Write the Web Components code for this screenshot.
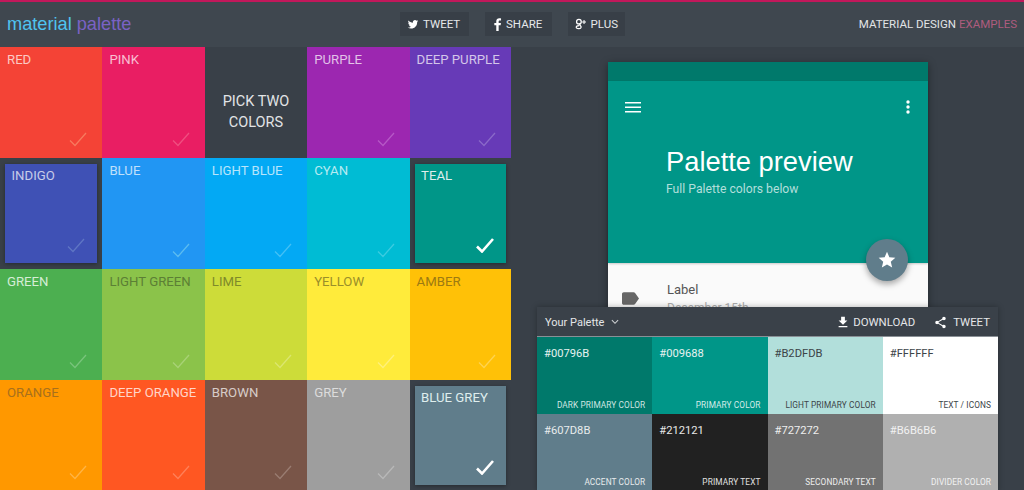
<!DOCTYPE html>
<html>
<head>
<meta charset="utf-8">
<title>material palette</title>
<style>
    html, body{
        margin: 0;
        height: 490px;
        overflow: hidden;
        background: #394048;
        font-family: Roboto, "Liberation Sans", sans-serif;
    }
    mp-app-row{
        display: grid;
    }
</style>
</head>
<body>
<mp-header></mp-header>
<mp-app-row style="grid-template-columns: 511px 513px;">
    <mp-grid>
        <mp-tile color="#F44336" check="#f77a5e">RED</mp-tile>
        <mp-tile color="#E91E63" check="#ef4f80">PINK</mp-tile>
        <mp-tile color="#394048" plain>PICK TWO<br>COLORS</mp-tile>
        <mp-tile color="#9C27B0" check="#b658c6">PURPLE</mp-tile>
        <mp-tile color="#673AB7" check="#8a69c9">DEEP PURPLE</mp-tile>

        <mp-tile color="#3F51B5" check="#5f76c4" selected>INDIGO</mp-tile>
        <mp-tile color="#2196F3" check="#5cbcf0">BLUE</mp-tile>
        <mp-tile color="#03A9F4" check="#44c0f5">LIGHT BLUE</mp-tile>
        <mp-tile color="#00BCD4" check="#3ccbe0">CYAN</mp-tile>
        <mp-tile color="#009688" check="#fff" selected active>TEAL</mp-tile>

        <mp-tile color="#4CAF50" check="#79c47c" text="#d5edd6">GREEN</mp-tile>
        <mp-tile color="#8BC34A" check="#a8d276" text="#5c7f35">LIGHT GREEN</mp-tile>
        <mp-tile color="#CDDC39" check="#dbe66f" text="#7f8a2a">LIME</mp-tile>
        <mp-tile color="#FFEB3B" check="#fff07a" text="#9a8f2a">YELLOW</mp-tile>
        <mp-tile color="#FFC107" check="#ffd350" text="#9c7a12">AMBER</mp-tile>

        <mp-tile color="#FF9800" check="#ffb445" text="#a8701c">ORANGE</mp-tile>
        <mp-tile color="#FF5722" check="#ff8059" text="#ffd5c8">DEEP ORANGE</mp-tile>
        <mp-tile color="#795548" check="#9a7d72" text="#d7ccc8">BROWN</mp-tile>
        <mp-tile color="#9E9E9E" check="#b8b8b8" text="#dcdcdc">GREY</mp-tile>
        <mp-tile color="#607D8B" check="#fff" selected active>BLUE GREY</mp-tile>
    </mp-grid>
    <mp-preview></mp-preview>
</mp-app-row>

<script>
class MpHeader extends HTMLElement {
    constructor(){
        super();
        this.attachShadow({mode:'open'});
        this.shadowRoot.innerHTML=`
            <style>
                :host{
                    display: flex;
                    box-sizing: border-box;
                    height: 47px;
                    align-items: center;
                    justify-content: space-between;
                    padding: 0 7px;
                    background: #3f474f;
                    border-top: 2px solid #c2185b;
                    position: relative;
                }
                .logo{
                    font-size: 18.200px;
                    font-family: "Liberation Sans", sans-serif;
                    color: #4fc3f0;
                    width: 393px;
                    margin-top: -1px;
                }
                .logo span{ color: #7a62c4; }
                .share{
                    display: flex;
                    gap: 16px;
                    flex: 1;
                    margin-top: -1px;
                }
                .btn{
                    display: flex;
                    align-items: center;
                    gap: 4px;
                    height: 24px;
                    padding: 0 7px;
                    background: #383f47;
                    color: #e6e8ea;
                    font-size: 11.500px;
                }
                .btn svg{ fill: #fff; }
                .links{
                    font-size: 11.500px;
                    color: #e2e4e6;
                    margin-top: -1px;
                }
                .links span{ color: #ae5c7e; }
            </style>
            <div class="logo">material <span>palette</span></div>
            <div class="share">
                <div class="btn" style="width:55px">
                    <svg width="12" height="12" viewBox="0 0 24 24"><path d="M22.46 6c-.77.35-1.6.58-2.46.69.88-.53 1.56-1.37 1.88-2.38-.83.5-1.75.85-2.72 1.05C18.37 4.5 17.26 4 16 4c-2.35 0-4.27 1.92-4.27 4.29 0 .34.04.67.11.98C8.28 9.09 5.11 7.38 3 4.79c-.37.63-.58 1.37-.58 2.15 0 1.49.75 2.81 1.91 3.56-.71 0-1.37-.2-1.95-.5v.03c0 2.08 1.48 3.82 3.44 4.21a4.22 4.22 0 0 1-1.93.07 4.28 4.28 0 0 0 4 2.98 8.521 8.521 0 0 1-5.33 1.84c-.34 0-.68-.02-1.02-.06C3.44 20.29 5.7 21 8.12 21 16 21 20.33 14.46 20.33 8.79c0-.19 0-.37-.01-.56.84-.6 1.56-1.36 2.14-2.23z"/></svg>
                    TWEET
                </div>
                <div class="btn" style="width:53px;gap:3px">
                    <svg width="11" height="13" viewBox="0 0 12 18"><path d="M7.6 18V10h2.700l.5-3.200H7.600V5c0-.9.3-1.500 1.600-1.500h1.700V.6C10.600.5 9.600.4 8.500.4 6 .4 4.300 1.900 4.300 4.600v2.200H1.600V10h2.700v8z"/></svg>
                    SHARE
                </div>
                <div class="btn" style="width:43px;gap:3px">
                    <svg width="13" height="14" viewBox="0 0 16 16"><g fill="none" stroke="#fff" stroke-width="1.600"><circle cx="5" cy="5" r="3"/><path d="M7 7.500c-2 1-1 2 .2 3 1.300 1.200.5 3.500-2.400 3.500-3 0-4-2-2.700-3.200 .8-.7 2-.8 3-.8"/><path d="M11.500 3v5M9 5.500h5" stroke-width="1.300"/></g></svg>
                    PLUS
                </div>
            </div>
            <div class="links">MATERIAL DESIGN <span>EXAMPLES</span></div>`;
    }
}

class MpGrid extends HTMLElement {
    constructor(){
        super();
        this.attachShadow({mode:'open'});
        this.shadowRoot.innerHTML=`
            <style>
                :host{
                    display: grid;
                    grid-template-columns: repeat(4, 102.400px) 101.400px;
                    grid-auto-rows: 111px;
                }
            </style>
            <slot></slot>`;
    }
}

class MpTile extends HTMLElement {
    constructor(){
        super();
        this.attachShadow({mode:'open'});
        this.shadowRoot.innerHTML=`
            <style>
                :host{
                    display: block;
                    font-size: 13.200px;
                    line-height: 15px;
                    white-space: nowrap;
                }
                :host([selected]){
                    padding: 6px 5px;
                }
                .box{
                    display: flex;
                    flex-direction: column;
                    box-sizing: border-box;
                    height: 100%;
                    padding: 5px 15px 11px 7px;
                }
                :host([selected]) .box{
                    padding: 4px 12px 10px 6.500px;
                    box-shadow: 0 1px 4px rgba(0,0,0,0.35);
                }
                :host([plain]) .box{
                    align-items: center;
                    justify-content: center;
                    text-align: center;
                    padding: 20px 0 0 0;
                    line-height: 20.500px;
                    color: #e2e4e6 !important;
                    font-size: 14.500px;
                }
                :host([plain]) svg{ display: none; }
                svg{
                    margin-top: auto;
                    align-self: flex-end;
                }
            </style>
            <div class="box">
                <div><slot></slot></div>
                <svg width="18" height="15" viewBox="0 0 18 15"><path fill="none" stroke-width="1.300" d="M1 8.500 L6 13.500 L17 1"/></svg>
            </div>`;
    }

    connectedCallback(){
        const box = this.shadowRoot.querySelector('.box');
        box.style.background = this.getAttribute('color');
        box.style.color = this.getAttribute('text') || 'rgba(255,255,255,0.72)';
        const path = this.shadowRoot.querySelector('path');
        path.setAttribute('stroke', this.getAttribute('check') || '#fff');
        if(this.hasAttribute('active')){
            path.setAttribute('stroke-width', '2.600');
            box.style.color = '#dfeeee';
        }
    }
}

class MpPreview extends HTMLElement {
    constructor(){
        super();
        this.attachShadow({mode:'open'});
        this.shadowRoot.innerHTML=`
            <style>
                :host{
                    display: block;
                    position: relative;
                    height: 443px;
                    overflow: hidden;
                    padding: 15px 0 0 1px;
                    box-sizing: border-box;
                }
                .card{
                    width: 320px;
                    margin: 0 auto;
                    position: relative;
                    background: #fafafa;
                    box-shadow: 0 2px 8px rgba(0,0,0,0.4);
                    height: 300px;
                }
                .status{ height: 19px; background: #00796B; }
                .bar{
                    box-sizing: border-box;
                    height: 182px;
                    background: #009688;
                    color: #fff;
                    padding: 19px 17px 0 17px;
                    box-shadow: 0 1px 2px rgba(0,0,0,0.2);
                }
                .tools{
                    display: flex;
                    justify-content: space-between;
                    align-items: center;
                    height: 14px;
                }
                .title{
                    margin: 31px 0 0 41px;
                    font-size: 27.300px;
                    line-height: 34px;
                    font-family: "Liberation Sans", sans-serif;
                }
                .sub{
                    margin: 2px 0 0 41px;
                    font-size: 12.200px;
                    line-height: 16px;
                    color: #b2dfdb;
                }
                .fab{
                    position: absolute;
                    left: 258px;
                    top: 177px;
                    width: 42px;
                    height: 42px;
                    border-radius: 50%;
                    background: #607D8B;
                    box-shadow: 0 3px 6px rgba(0,0,0,0.35);
                    display: flex;
                    align-items: center;
                    justify-content: center;
                }
                .row{
                    display: flex;
                    padding: 18px 0 0 14px;
                }
                .row svg{ margin-top: 11px; }
                .text{ margin-left: 28px; }
                .label{ font-size: 13px; line-height: 18px; color: #555; }
                .date{ font-size: 12px; line-height: 16px; color: #aaa; margin-top: 1px; }
            </style>
            <div class="card">
                <div class="status"></div>
                <div class="bar">
                    <div class="tools">
                        <svg width="16" height="11" viewBox="0 0 16 11"><path fill="#fff" d="M0 0h16v1.600H0zM0 4.500h16v1.600H0zM0 9h16v1.600H0z"/></svg>
                        <svg width="4" height="14" viewBox="0 0 4 14" style="margin-right:1px"><circle cx="2" cy="2" r="1.700" fill="#fff"/><circle cx="2" cy="7" r="1.700" fill="#fff"/><circle cx="2" cy="12" r="1.700" fill="#fff"/></svg>
                    </div>
                    <div class="title">Palette preview</div>
                    <div class="sub">Full Palette colors below</div>
                </div>
                <div class="fab"><svg width="20" height="20" viewBox="0 0 24 24"><path fill="#fff" d="M12 17.270L18.180 21l-1.640-7.030L22 9.240l-7.190-.61L12 2 9.190 8.630 2 9.240l5.460 4.730L5.820 21z"/></svg></div>
                <div class="row">
                    <svg width="17" height="13" viewBox="3 5 19 14"><path fill="#666" d="M17.630 5.840C17.270 5.330 16.670 5 16 5L5 5.010C3.900 5.010 3 5.900 3 7v10c0 1.100.9 1.990 2 1.990L16 19c.67 0 1.270-.33 1.630-.84L22 12l-4.370-6.160z"/></svg>
                    <div class="text">
                        <div class="label">Label</div>
                        <div class="date">December 15th</div>
                    </div>
                </div>
            </div>
            <mp-palette></mp-palette>`;
    }
}

class MpPalette extends HTMLElement {
    constructor(){
        super();
        this.attachShadow({mode:'open'});
        const swatches = [
            ['#00796B', '#00796B', 'DARK PRIMARY COLOR', '#e6f2f0', '#cfe6e2'],
            ['#009688', '#009688', 'PRIMARY COLOR', '#e6f2f0', '#d5ece9'],
            ['#B2DFDB', '#B2DFDB', 'LIGHT PRIMARY COLOR', '#3c4448', '#3c4448'],
            ['#FFFFFF', '#FFFFFF', 'TEXT / ICONS', '#3c4448', '#3c4448'],
            ['#607D8B', '#607D8B', 'ACCENT COLOR', '#e8eced', '#e8eced'],
            ['#212121', '#212121', 'PRIMARY TEXT', '#e8e8e8', '#e0e0e0'],
            ['#727272', '#727272', 'SECONDARY TEXT', '#eee', '#eee'],
            ['#B6B6B6', '#B0B0B0', 'DIVIDER COLOR', '#f2f2f2', '#f2f2f2']
        ];
        const cells = swatches.map(s => `
            <div class="cell" style="background:${s[1]};color:${s[3]}">
                <div class="hex">${s[0]}</div>
                <div class="name" style="color:${s[4]}">${s[2]}</div>
            </div>`).join('');
        this.shadowRoot.innerHTML=`
            <style>
                :host{
                    display: block;
                    position: absolute;
                    left: 26px;
                    top: 260px;
                    width: 461px;
                    background: #3a4149;
                    box-shadow: 0 0 6px rgba(0,0,0,0.3);
                }
                .head{
                    display: flex;
                    align-items: center;
                    height: 30px;
                    padding: 1px 8px 0 8px;
                    color: #e4e6e8;
                    font-size: 11.400px;
                    border-bottom: 1px solid #8a9096;
                    box-sizing: border-box;
                }
                .head svg{ fill: #fff; }
                .title{ font-size: 11px; }
                .chev{ margin-left: 7px; }
                .action{
                    display: flex;
                    align-items: center;
                    gap: 5px;
                    margin-left: 20px;
                }
                .spacer{ flex: 1; }
                .cells{
                    display: grid;
                    grid-template-columns: repeat(4, 1fr);
                    grid-auto-rows: 77px;
                }
                .cell{
                    display: flex;
                    flex-direction: column;
                    justify-content: space-between;
                    padding: 10px 7px 3.500px 7px;
                }
                .hex{ font-size: 11.200px; line-height: 14px; }
                .name{ font-size: 8.300px; line-height: 12px; text-align: right; letter-spacing: 0.1px; }
            </style>
            <div class="head">
                <span class="title">Your Palette</span>
                <svg class="chev" style="fill:none" width="8" height="6" viewBox="0 0 9 6"><path stroke="#cfd2d4" stroke-width="1.200" fill="none" d="M1 1 L4.500 4.500 L8 1"/></svg>
                <span class="spacer"></span>
                <span class="action">
                    <svg width="10" height="12" viewBox="4 2 16 19"><path d="M19 9h-4V3H9v6H5l7 7 7-7zM5 18v2h14v-2H5z"/></svg>
                    DOWNLOAD
                </span>
                <span class="action" style="gap:7px">
                    <svg width="11" height="13" viewBox="2.500 1.500 19 21"><path d="M18 16.080c-.76 0-1.440.3-1.960.77L8.910 12.700c.05-.23.09-.46.09-.7s-.04-.47-.09-.7l7.050-4.110c.54.5 1.250.81 2.040.81 1.660 0 3-1.340 3-3s-1.340-3-3-3-3 1.340-3 3c0 .24.04.47.09.7L8.040 9.810C7.500 9.310 6.790 9 6 9c-1.660 0-3 1.340-3 3s1.340 3 3 3c.79 0 1.500-.31 2.040-.81l7.120 4.160c-.05.21-.08.43-.08.65 0 1.610 1.310 2.920 2.920 2.920s2.920-1.310 2.920-2.920-1.310-2.920-2.920-2.920z"/></svg>
                    TWEET
                </span>
            </div>
            <div class="cells">${cells}</div>`;
    }
}

customElements.define('mp-header', MpHeader);
customElements.define('mp-grid', MpGrid);
customElements.define('mp-tile', MpTile);
customElements.define('mp-palette', MpPalette);
customElements.define('mp-preview', MpPreview);
</script>
</body>
</html>
